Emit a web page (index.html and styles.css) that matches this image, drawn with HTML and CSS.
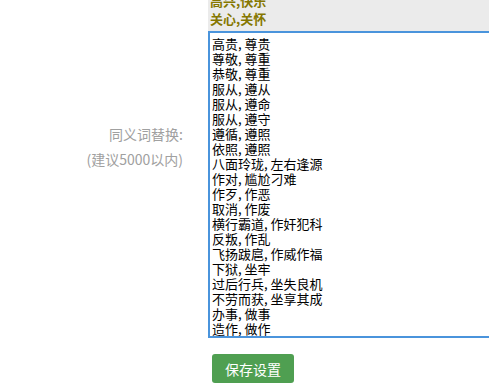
FILE: index.html
```html
<!DOCTYPE html>
<html lang="zh-CN">
<head>
<meta charset="utf-8">
<title>同义词替换</title>
<link rel="stylesheet" href="styles.css">
</head>
<body>
<div class="top">
  <div class="top-inner">
    <div>高兴,快乐</div>
    <div>关心,关怀</div>
  </div>
</div>
<div class="row">
  <div class="label">
    <div>同义词替换:</div>
    <div>(建议5000以内)</div>
  </div>
  <textarea class="words" spellcheck="false">高贵, 尊贵
尊敬, 尊重
恭敬, 尊重
服从, 遵从
服从, 遵命
服从, 遵守
遵循, 遵照
依照, 遵照
八面玲珑, 左右逢源
作对, 尴尬刁难
作歹, 作恶
取消, 作废
横行霸道, 作奸犯科
反叛, 作乱
飞扬跋扈, 作威作福
下狱, 坐牢
过后行兵, 坐失良机
不劳而获, 坐享其成
办事, 做事
造作, 做作</textarea>
</div>
<div class="actions">
  <button class="save" type="button">保存设置</button>
</div>
</body>
</html>
```
FILE: styles.css
```css
html, body {
  margin: 0;
  padding: 0;
  background: #ffffff;
  overflow: hidden;
}
body {
  font-family: "Noto Sans CJK SC", "Noto Sans", sans-serif;
}
.top {
  margin-left: 208px;
  height: 31px;
  background: #ebebeb;
  overflow: hidden;
  padding-left: 2px;
}
.top-inner {
  margin-top: -8px;
  font-size: 13px;
  line-height: 18px;
  font-weight: bold;
  color: #857700;
}
.row {
  display: flex;
  overflow: hidden;
}
.label {
  width: 208px;
  flex-shrink: 0;
  box-sizing: border-box;
  padding-right: 25px;
  padding-top: 91px;
  text-align: right;
  font-size: 14px;
  line-height: 25px;
  color: #a0a0a0;
}
.words {
  flex-shrink: 0;
  width: 320px;
  height: 307px;
  box-sizing: border-box;
  margin: 0;
  padding: 3px 2px;
  border: 2px solid #4a94dc;
  border-right: none;
  outline: none;
  resize: none;
  overflow: hidden;
  font-family: "Noto Sans CJK SC", "Noto Sans", sans-serif;
  font-size: 13px;
  line-height: 15px;
  color: #000000;
  background: #ffffff;
}
.actions {
  padding-left: 212px;
  margin-top: 16px;
}
.save {
  width: 82px;
  height: 29px;
  border: none;
  border-radius: 3px;
  background: #4f9f51;
  color: #ffffff;
  font-family: "Noto Sans CJK SC", "Noto Sans", sans-serif;
  font-size: 14px;
  padding: 0;
  cursor: pointer;
}
```
